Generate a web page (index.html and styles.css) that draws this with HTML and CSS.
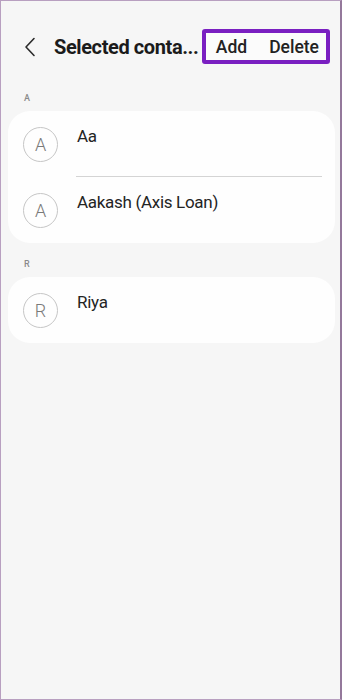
FILE: index.html
```html
<!DOCTYPE html>
<html lang="en">
<head>
  <meta charset="UTF-8" />
  <meta name="viewport" content="width=device-width, initial-scale=1.0" />
  <title>Selected contacts</title>
  <link rel="stylesheet" href="styles.css">
</head>
<body>

  <div class="screen">
    <header class="top-bar">
      <button class="back-btn" aria-label="Back">
        <svg width="12" height="20" viewBox="0 0 12 20">
          <polyline points="10,1.5 2,10 10,18.5" fill="none" stroke="#2b2b2b" stroke-width="1.6" stroke-linecap="round" stroke-linejoin="round" />
        </svg>
      </button>
      <h1 class="title">Selected conta...</h1>
      <div class="actions">
        <button class="action-btn">Add</button>
        <button class="action-btn">Delete</button>
      </div>
    </header>

    <div class="section-label">A</div>
    <div class="card">
      <div class="contact">
        <div class="avatar">A</div>
        <div class="name">Aa</div>
      </div>
      <div class="divider"></div>
      <div class="contact">
        <div class="avatar">A</div>
        <div class="name">Aakash (Axis Loan)</div>
      </div>
    </div>

    <div class="section-label">R</div>
    <div class="card">
      <div class="contact">
        <div class="avatar">R</div>
        <div class="name">Riya</div>
      </div>
    </div>
  </div>

</body>
</html>
```

FILE: styles.css
```css
body {
  margin: 0;
  font-family: Roboto, 'Liberation Sans', sans-serif;
  background-color: #f6f6f6;
}

.screen {
  height: 700px;
  box-sizing: border-box;
  border: 1px solid #b89fc0;
  border-right: 2px solid #94789b;
}

.top-bar {
  display: flex;
  align-items: center;
  padding: 28px 10px 13px 23px;
  height: 35px;
}

.back-btn {
  background: none;
  border: none;
  padding: 0;
  width: 12px;
  height: 20px;
  margin-right: 18px;
  cursor: pointer;
}

.title {
  flex: 1;
  margin: 0;
  font-size: 20px;
  font-weight: 700;
  color: #1b1b1b;
  letter-spacing: -0.4px;
  white-space: nowrap;
}

.actions {
  display: flex;
  gap: 22px;
  height: 27px;
  align-items: center;
  padding: 0 7px 0 10px;
  border: 4px solid #7a1fc1;
  border-radius: 3px;
  background-color: #fbfbfb;
}

.action-btn {
  background: none;
  border: none;
  padding: 0;
  font-family: inherit;
  font-size: 17.5px;
  font-weight: 500;
  color: #222;
  cursor: pointer;
}

.section-label {
  padding: 16px 23px 7px;
  font-size: 9px;
  line-height: 11px;
  font-weight: 500;
  color: #8a8a8a;
}

.card {
  margin: 0 5px 0 7px;
  background-color: #fefefe;
  border-radius: 22px;
}

.contact {
  display: flex;
  align-items: center;
  height: 66px;
  padding-left: 15px;
}

.avatar {
  width: 33px;
  height: 33px;
  border: 1px solid #c6c6c6;
  border-radius: 50%;
  display: flex;
  align-items: center;
  justify-content: center;
  font-size: 18px;
  font-weight: 300;
  color: #7a7a7a;
  flex-shrink: 0;
}

.name {
  align-self: flex-start;
  padding-top: 14px;
  margin-left: 19px;
  font-size: 17px;
  line-height: 22px;
  letter-spacing: -0.3px;
  color: #242424;
}

.divider {
  height: 1px;
  background-color: #d4d4d4;
  margin: -1px 13px 0 68px;
}
```
